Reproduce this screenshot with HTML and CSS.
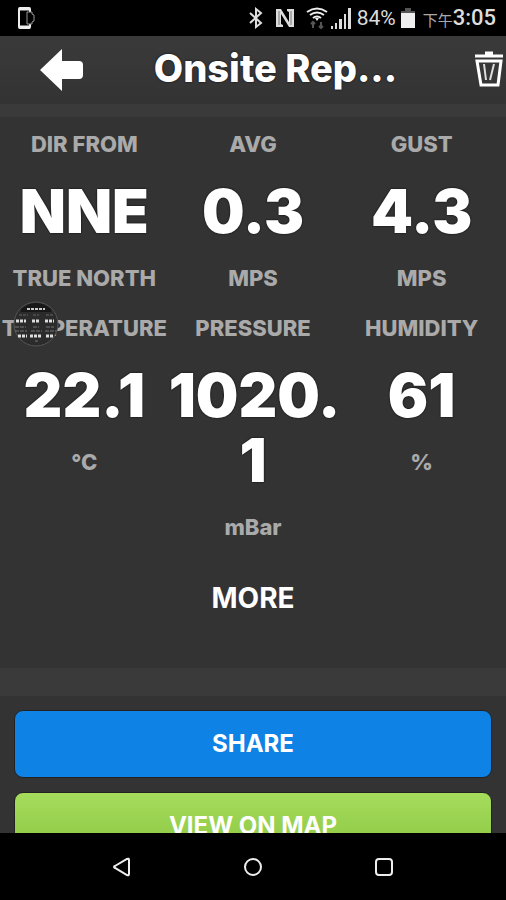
FILE: index.html
```
<!doctype html>
<html lang="en">
<head>
<meta charset="utf-8">
<meta name="viewport" content="width=device-width, initial-scale=1">
<title>Onsite Report</title>
<link rel="stylesheet" href="styles.css">
</head>
<body>
    <div class="status">
        <svg class="phone" width="20" height="24" viewBox="0 0 20 24">
            <rect x="3" y="2" width="11" height="20" rx="1" fill="none" stroke="#eee" stroke-width="2"/>
            <path d="M3 3h11M3 21h11" stroke="#eee" stroke-width="3"/>
            <path d="M11 6h5v2l2 1v6l-2 1v2h-5z" fill="#000" stroke="#999"/>
        </svg>
        <svg width="14" height="22" viewBox="0 0 14 22">
            <path d="M1 6l11 10-5 4V2l5 4L1 16" fill="none" stroke="#ddd" stroke-width="2"/>
        </svg>
        <svg class="nfc" width="20" height="20" viewBox="0 0 20 20">
            <path d="M1 1h5l8 13V4l-2-1V1h7v18h-5L6 6v10l2 1v2H1z" fill="#ddd"/>
            <path d="M4 3v14M16 3v14" stroke="#777"/>
        </svg>
        <svg class="wifi" width="22" height="22" viewBox="0 0 22 22">
            <path d="M1 5q10-7 20 0M4 8q7-5 14 0M7 11q4-3 8 0" fill="none" stroke="#eee" stroke-width="2"/>
            <path d="M9 11h4l-2 3z" fill="#eee"/>
            <path d="M7 21v-6M5 17l2-2 2 2M15 15v6M13 19l2 2 2-2" fill="none" stroke="#555" stroke-width="2"/>
        </svg>
        <svg class="signal" width="22" height="22" viewBox="0 0 22 22">
            <path d="M1 19h2v3H1zM5 16h2v6H5zM9 12h3v10H9zM14 7h2v15h-2zM18 1h3v21h-3z" fill="#ddd"/>
        </svg>
        <span class="percent">84%</span>
        <svg class="battery" width="14" height="20" viewBox="0 0 14 20">
            <path d="M0 3h4V0h6v3h4v2H0z" fill="#555"/>
            <path d="M0 5h14v15H0z" fill="#eee"/>
        </svg>
        <span class="ampm">下午</span><span class="clock">3:05</span>
    </div>

    <header>
        <button class="back" aria-label="Back">
            <svg width="46" height="46" viewBox="0 0 46 46">
                <path d="M1 23L23 2v12h17q4 0 4 4v10q0 4-4 4H23v12z" fill="#fff"/>
            </svg>
        </button>
        <h1>Onsite Rep...</h1>
        <button class="trash" aria-label="Delete">
            <svg width="32" height="38" viewBox="0 0 32 38">
                <path d="M1 5h28M11 2h8" fill="none" stroke="#fff" stroke-width="3"/>
                <path d="M3 10h24l-3 24H7z" fill="none" stroke="#fff" stroke-width="3"/>
                <path d="M10 13l2 16M20 13l-4 16" stroke="#ddd" stroke-width="2"/>
            </svg>
        </button>
    </header>

    <main>
        <section class="readings">
            <div class="reading"><h2>DIR FROM</h2><p>NNE</p><span>TRUE NORTH</span></div>
            <div class="reading"><h2>AVG</h2><p>0.3</p><span>MPS</span></div>
            <div class="reading"><h2>GUST</h2><p>4.3</p><span>MPS</span></div>
            <div class="reading">
                <h2>TEMPERATURE</h2><p>22.1</p><span>°C</span>
                <svg class="bubble" width="46" height="46" viewBox="0 0 46 46">
                    <circle cx="23" cy="23" r="22" fill="#2b2b2b" stroke="#555"/>
                    <path d="M8 8q15-12 30 0v3H8z" fill="#181818"/>
                    <path d="M14 8h18" stroke="#ccc" stroke-width="2" stroke-dasharray="3 1"/>
                    <path d="M6 14h9M20 14h6M33 14h7" stroke="#666" stroke-dasharray="3 1"/>
                    <path d="M3 20h10M19 20h7M32 20h9M5 35h9M17 35h12M33 35h7" stroke="#ddd" stroke-width="3" stroke-dasharray="3 1"/>
                    <path d="M2 26h11M20 26h6M33 26h8M2 30h12M18 30h11M32 30h11M22 40h3" stroke="#777" stroke-dasharray="4 1"/>
                </svg>
            </div>
            <div class="reading"><h2>PRESSURE</h2><p>1020.<wbr>1</p><span>mBar</span></div>
            <div class="reading"><h2>HUMIDITY</h2><p>61</p><span>%</span></div>
        </section>
        <button class="more">MORE</button>
        <div class="actions">
            <button class="share">SHARE</button>
            <button class="map">VIEW ON MAP</button>
        </div>
    </main>

    <nav>
        <button aria-label="Back"><svg width="20" height="20" viewBox="0 0 20 20"><path d="M3 9L15 2q2-1 2 1v14q0 2-2 1L3 11q-2-1 0-2z"/></svg></button>
        <button aria-label="Home"><svg width="20" height="20" viewBox="0 0 20 20"><circle cx="10" cy="10" r="8"/></svg></button>
        <button aria-label="Recent"><svg width="20" height="20" viewBox="0 0 20 20"><rect x="2" y="2" width="16" height="16" rx="3"/></svg></button>
    </nav>
</body>
</html>
```

FILE: styles.css
```
*
{
    box-sizing:border-box;
}
body
{
    margin:0;
    height:100vh;
    display:flex;
    flex-direction:column;
    overflow:hidden;
    background:#333;
    color:#fff;
    font-family:Inter, "Noto Sans CJK TC", sans-serif;
}
button
{
    border:none;
    padding:0;
    background:none;
    color:#fff;
    font:bold 24px/32px Inter, sans-serif;
}
svg
{
    display:block;
}
h1, h2, p
{
    margin:0;
}
.status
{
    flex:none;
    display:flex;
    align-items:center;
    height:36px;
    padding:0 10px 0 16px;
    background:#000;
    color:#ddd;
    font:21px/36px Roboto, sans-serif;
    white-space:nowrap;
}
.phone
{
    margin-right:auto;
}
.nfc
{
    margin-left:12px;
}
.wifi
{
    margin-left:11px;
}
.signal
{
    margin:0 5px 0 2px;
}
.battery
{
    margin:0 8px 0 5px;
}
.ampm
{
    padding-top:4px;
    font:15px/32px "Noto Sans CJK TC", sans-serif;
    color:#aaa;
}
.clock
{
    font-size:22px;
    font-weight:500;
}
header
{
    flex:none;
    display:flex;
    align-items:center;
    height:68px;
    padding-left:39px;
    background:linear-gradient(#3a3a3a, #333);
}
h1
{
    flex:1;
    padding:0 8px 4px 0;
    text-align:center;
    font-size:38px;
    line-height:44px;
    font-weight:800;
    white-space:nowrap;
    text-shadow:0 0 2px #000;
}
main
{
    flex:1;
    min-height:0;
    overflow:hidden;
    border-top:13px solid #3a3a3a;
}
.readings
{
    display:grid;
    grid-template-columns:repeat(3, minmax(0, 1fr));
    padding-top:4px;
    text-align:center;
}
.reading
{
    position:relative;
    padding-bottom:3px;
}
.reading h2, .reading span
{
    display:block;
    color:#aaa;
    font-size:22px;
    line-height:47px;
    font-weight:800;
}
.reading p
{
    padding:11px 0;
    font-size:60px;
    line-height:65px;
    font-weight:900;
    text-shadow:0 0 2px #000;
}
.bubble
{
    position:absolute;
    left:13px;
    top:-4px;
}
.more
{
    display:block;
    width:100%;
    padding:28px 0 54px;
    font-size:28px;
}
.actions
{
    display:grid;
    gap:14px;
    padding:14px 14px 0;
    border-top:28px solid #3a3a3a;
}
.share, .map
{
    height:68px;
    border:1px solid #222;
    border-radius:9px;
}
.share
{
    background:#0f82e6;
}
.map
{
    background:linear-gradient(#a6dc5c, #88c540);
}
nav
{
    flex:none;
    display:flex;
    justify-content:center;
    gap:111px;
    height:67px;
    background:#000;
}
nav svg
{
    fill:none;
    stroke:#eee;
    stroke-width:2;
}
```
